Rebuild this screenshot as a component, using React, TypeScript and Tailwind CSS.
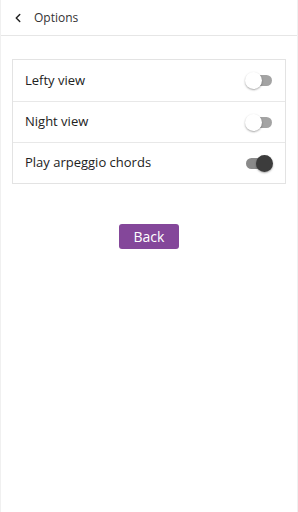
import { ChevronLeft } from 'lucide-react'

interface ToggleProps {
  on?: boolean
}

function Toggle({ on }: ToggleProps) {
  if (on) {
    return (
      <div className="relative w-[28px] h-[18px] flex items-center">
        <div className="absolute left-[1px] w-[24px] h-[11px] rounded-full bg-[#8a8a8a]" />
        <div className="absolute right-0 w-[17px] h-[17px] rounded-full bg-[#3c3c3c] shadow-[0_1px_2px_rgba(0,0,0,0.35)]" />
      </div>
    )
  }
  return (
    <div className="relative w-[28px] h-[18px] flex items-center">
      <div className="absolute right-[1px] w-[24px] h-[11px] rounded-full bg-[#a3a3a3]" />
      <div className="absolute left-0 w-[17px] h-[17px] rounded-full bg-white shadow-[0_1px_2px_rgba(0,0,0,0.35)]" />
    </div>
  )
}

const rows = [
  { label: 'Lefty view', on: false },
  { label: 'Night view', on: false },
  { label: 'Play arpeggio chords', on: true },
]

export default function App() {
  return (
    <div
      className="w-[298px] h-[512px] bg-white text-[#222] border-x border-[#f0f0f0]"
      style={{ fontFamily: '"Open Sans", "Noto Sans", sans-serif' }}
    >
      <div className="h-[36px] flex items-center px-[10px] border-b border-[#e6e6e6]">
        <ChevronLeft className="w-[14px] h-[14px] text-[#222]" strokeWidth={2.5} />
        <span className="ml-[9px] text-[12px] text-[#333]">Options</span>
      </div>

      <div className="mx-[11px] mt-[23px] border border-[#e3e3e3]">
        {rows.map((row, i) => (
          <div
            key={row.label}
            className={
              'h-[41px] flex items-center justify-between pl-[12px] pr-[12px] ' +
              (i > 0 ? 'border-t border-[#e8e8e8]' : '')
            }
          >
            <span className="text-[13px] text-[#222]">{row.label}</span>
            <Toggle on={row.on} />
          </div>
        ))}
      </div>

      <div className="flex justify-center mt-[40px]">
        <button className="w-[60px] h-[25px] rounded-[3px] bg-[#84479a] text-white text-[14px] leading-none">
          Back
        </button>
      </div>
    </div>
  )
}
